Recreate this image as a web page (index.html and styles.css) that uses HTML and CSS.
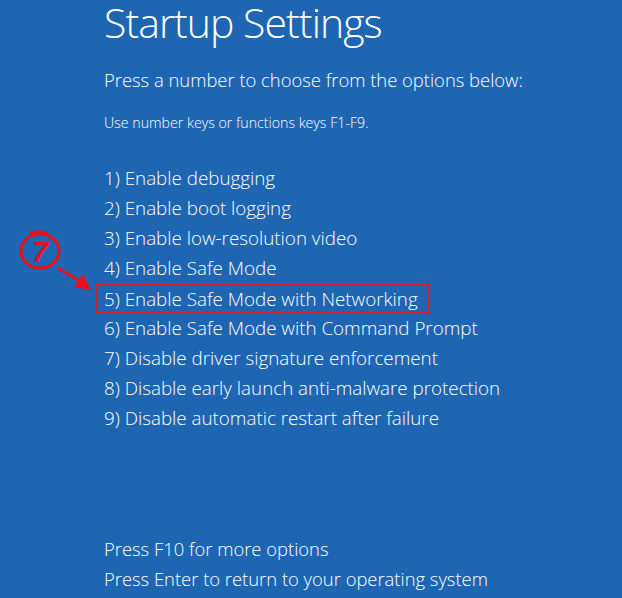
FILE: index.html
```html
<!DOCTYPE html>
<html lang="en">
<head>
    <meta charset="UTF-8">
    <meta name="viewport" content="width=device-width, initial-scale=1.0">
    <title>Startup Settings</title>
    <link rel="stylesheet" href="styles.css">
</head>
<body>
    <div class="screen">
        <h1 class="title">Startup Settings</h1>
        <p class="lead">Press a number to choose from the options below:</p>
        <p class="hint">Use number keys or functions keys F1-F9.</p>

        <ul class="options">
            <li>1) Enable debugging</li>
            <li>2) Enable boot logging</li>
            <li>3) Enable low-resolution video</li>
            <li>4) Enable Safe Mode</li>
            <li class="marked"><span class="box">5) Enable Safe Mode with Networking</span></li>
            <li>6) Enable Safe Mode with Command Prompt</li>
            <li>7) Disable driver signature enforcement</li>
            <li>8) Disable early launch anti-malware protection</li>
            <li>9) Disable automatic restart after failure</li>
        </ul>

        <div class="footer">
            <div>Press F10 for more options</div>
            <div>Press Enter to return to your operating system</div>
        </div>
    </div>

    <!-- step annotation -->
    <svg class="step" width="100" height="70" viewBox="0 0 100 70">
        <ellipse cx="40" cy="21" rx="19" ry="17" fill="none" stroke="#e8101c" stroke-width="3"/>
        <path d="M29 3 Q38 0 47 3" fill="none" stroke="#e8101c" stroke-width="2.5"/>
        <text x="40" y="32" text-anchor="middle" class="step-num">7</text>
        <line x1="58" y1="38" x2="81" y2="52" stroke="#e8101c" stroke-width="3"/>
        <polygon points="91,60 74,57 83,44" fill="#e8101c"/>
    </svg>
</body>
</html>
```

FILE: styles.css
```css
body {
    margin: 0;
    background-color: #1e66b1;
    color: #fff;
    font-family: "Open Sans", "Noto Sans", sans-serif;
    font-weight: 300;
    overflow: hidden;
}

.screen {
    padding-left: 104px;
    height: 598px;
}

.title {
    margin: 0;
    font-size: 41px;
    font-weight: 300;
    line-height: 44px;
    letter-spacing: -0.95px;
}

.lead {
    margin: 21px 0 0;
    font-size: 18.4px;
    line-height: 30px;
}

.hint {
    margin: 18px 0 0;
    font-size: 14.2px;
    line-height: 20px;
}

.options {
    list-style: none;
    margin: 31px 0 0;
    padding: 0;
    font-size: 18.8px;
}

.options li {
    height: 30px;
    line-height: 29px;
}

.box {
    display: inline-block;
    box-sizing: border-box;
    height: 30px;
    line-height: 26px;
    margin-left: -8px;
    padding: 0 9px 0 6px;
    border: 2px solid #d4202c;
}

.footer {
    margin-top: 100px;
    font-size: 18.4px;
    line-height: 30px;
}

.step {
    position: absolute;
    left: 0;
    top: 230px;
}

.step-num {
    font-family: "Liberation Sans", sans-serif;
    font-size: 29px;
    font-weight: bold;
    font-style: italic;
    fill: #e8101c;
}
```
